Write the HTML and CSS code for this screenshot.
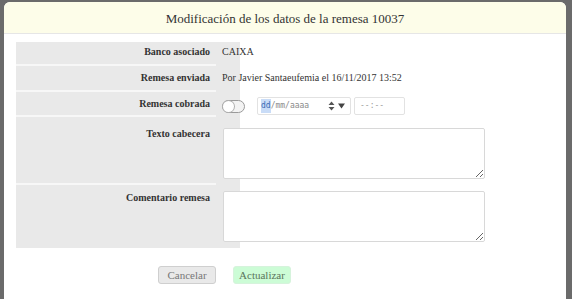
FILE: index.html
```html
<!DOCTYPE html>
<html lang="es">
<head>
<meta charset="utf-8">
<link rel="stylesheet" href="styles.css">
</head>
<body>
<div class="modal">
  <div class="modal-header">Modificación de los datos de la remesa 10037</div>
  <div class="modal-body">
    <div class="form">
      <div class="row r1">
        <div class="label">Banco asociado</div>
        <div class="value">CAIXA</div>
      </div>
      <div class="row r2">
        <div class="label">Remesa enviada</div>
        <div class="value">Por Javier Santaeufemia el 16/11/2017 13:52</div>
      </div>
      <div class="row r3">
        <div class="label">Remesa cobrada</div>
        <div class="value controls">
          <span class="toggle"><span class="knob"></span></span>
          <span class="date"><span class="sel">dd</span><span class="ph">/mm/aaaa</span><span class="spin">
            <svg width="7" height="10" viewBox="0 0 7 10"><path d="M3.5 0.5 L6.5 4 H0.5Z M3.5 9.5 L6.5 6 H0.5Z" fill="#555"/></svg>
          </span><span class="drop"><svg width="7" height="6" viewBox="0 0 7 6"><path d="M0 0.5 H7 L3.5 5.5Z" fill="#444"/></svg></span></span>
          <span class="time">--:--</span>
        </div>
      </div>
      <div class="row r4">
        <div class="label">Texto cabecera</div>
        <div class="value"><textarea class="ta"></textarea></div>
      </div>
      <div class="row r5">
        <div class="label">Comentario remesa</div>
        <div class="value"><textarea class="ta"></textarea></div>
      </div>
    </div>
    <div class="buttons">
      <button class="btn cancel">Cancelar</button>
      <button class="btn ok">Actualizar</button>
    </div>
  </div>
</div>
</body>
</html>
```

FILE: styles.css
```css
html, body {
  margin: 0;
  height: 100%;
}
body {
  background: #6b6b6b;
  padding: 2px 6px 0 4px;
  box-sizing: border-box;
  font-family: "Liberation Serif", "Times New Roman", serif;
  color: #333;
  overflow: hidden;
}
.modal {
  background: #fff;
  border-radius: 6px 6px 0 0;
  height: 100%;
  overflow: hidden;
}
.modal-header {
  background: #fdfde9;
  border-bottom: 1px solid #e6e6e6;
  height: 31px;
  line-height: 33px;
  text-align: center;
  font-size: 13px;
  color: #333;
}
.modal-body {
  padding: 8px 0 0 12px;
}
.form {
  width: 470px;
  background: linear-gradient(to right, #e9e9e9 224px, transparent 224px);
}
.row {
  display: flex;
  box-sizing: border-box;
}
.r1 { height: 24px; }
.r2 { height: 26px; }
.r3 { height: 25px; }
.r4 { height: 68px; }
.r5 { height: 63px; }
.label {
  width: 200px;
  flex: none;
  box-sizing: border-box;
  padding: 0 6px 0 0;
  text-align: right;
  font-weight: bold;
  font-size: 10px;
  line-height: 12px;
  color: #333;
  border-bottom: 2px solid #f7f7f7;
}
.r1 .label { padding-top: 4px; }
.r2 .label { padding-top: 6px; }
.r3 .label { padding-top: 6px; }
.r4 .label { padding-top: 11px; }
.r5 .label { padding-top: 7px; border-bottom: none; }
.value {
  padding: 0 0 0 6px;
  font-size: 10px;
  line-height: 12px;
  color: #333;
}
.r1 .value { padding-top: 4px; }
.r2 .value { padding-top: 6px; }
.r4 .value { padding-top: 11px; padding-left: 7px; }
.r5 .value { padding-top: 6px; padding-left: 7px; }
.controls {
  display: flex;
  align-items: center;
  padding-top: 5px;
  height: 18px;
}
.toggle {
  width: 21px;
  height: 11px;
  border: 1px solid #9a9a9a;
  border-radius: 7px;
  background: #f3f3f3;
  position: relative;
  margin-right: 12px;
}
.knob {
  position: absolute;
  left: 0;
  top: 0;
  width: 11px;
  height: 11px;
  border-radius: 50%;
  background: #fff;
  box-shadow: 0 0 0 1px #b0b0b0;
}
.date {
  display: flex;
  align-items: center;
  width: 94px;
  height: 18px;
  border: 1px solid #e2e2e2;
  border-radius: 2px;
  font-family: "DejaVu Sans Mono", monospace;
  font-size: 8px;
  color: #888;
  padding-left: 3px;
  box-sizing: border-box;
  margin-right: 3px;
}
.sel {
  background: #c9dcf7;
  color: #3a6bb5;
  padding: 1px 0;
}
.ph { color: #8a8a8a; }
.spin {
  margin-left: auto;
  display: flex;
  margin-right: 3px;
}
.drop {
  display: flex;
  margin-right: 5px;
}
.time {
  width: 51px;
  height: 18px;
  border: 1px solid #e2e2e2;
  border-radius: 2px;
  font-family: "DejaVu Sans Mono", monospace;
  font-size: 8px;
  color: #999;
  padding-left: 5px;
  line-height: 16px;
  box-sizing: border-box;
}
.ta {
  display: block;
  width: 262px;
  height: 51px;
  box-sizing: border-box;
  border: 1px solid #d8d8d8;
  border-radius: 2px;
  background: #fff;
  margin: 0;
}
.buttons {
  display: flex;
  gap: 17px;
  padding: 18px 0 0 142px;
}
.btn {
  width: 58px;
  height: 18px;
  box-sizing: border-box;
  border-radius: 3px;
  font-family: "Liberation Serif", "Times New Roman", serif;
  font-size: 11px;
  padding: 0;
}
.cancel {
  background: #e9e9e9;
  border: 1px solid #cfcfcf;
  color: #777;
}
.ok {
  background: #ccfcd6;
  border: 1px solid #d6f3dc;
  color: #5a755c;
}
```
